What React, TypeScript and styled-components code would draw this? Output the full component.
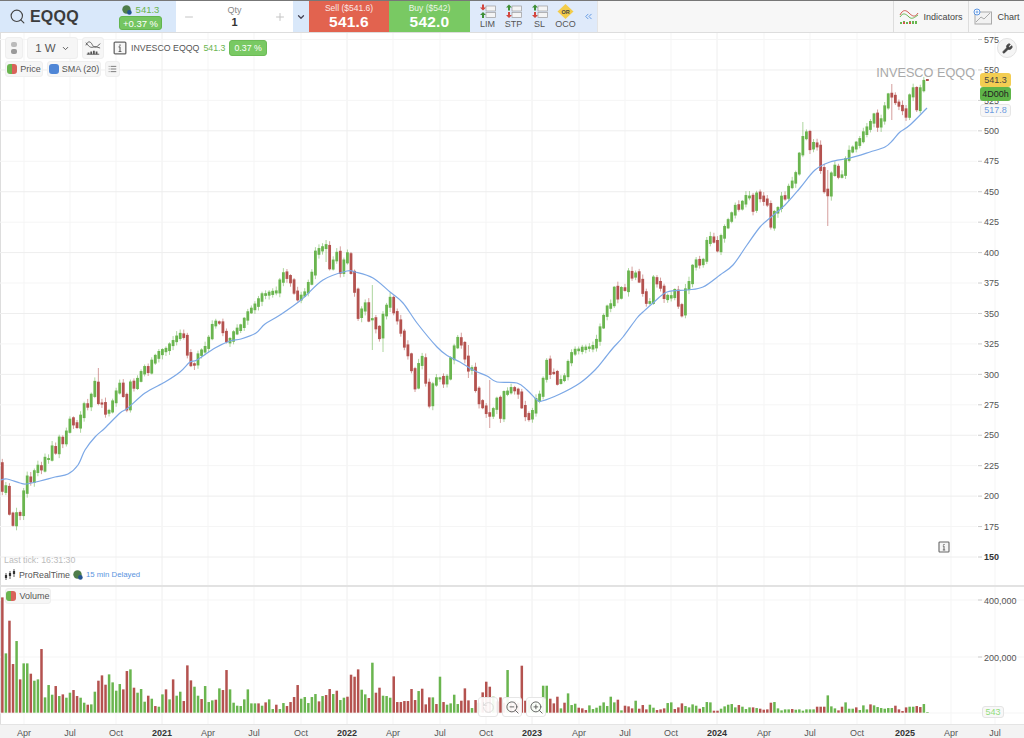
import styled, { createGlobalStyle } from "styled-components";
import { ChevronDown, ChevronsLeft, List, Minus, Plus, RotateCcw, Search, Wrench, ZoomIn, ZoomOut } from "lucide-react";

const GREEN = "#6ab54f";
const RED = "#b4524f";
const BLUE = "#7ca8e6";

const GlobalStyle = createGlobalStyle`
  html, body { margin: 0; padding: 0; background: #fff; }
  body { font-family: "Liberation Sans", Arial, sans-serif; color: #444; }
  * { box-sizing: border-box; }
`;

const Page = styled.div`
  width: 1024px;
  height: 738px;
  display: flex;
  flex-direction: column;
  overflow: hidden;
`;

/* ---------- top toolbar ---------- */

const TopBar = styled.header`
  height: 33px;
  flex: none;
  display: flex;
  border-top: 1px solid #777;
  border-bottom: 1px solid #ddd;
  background: #f7f7f7;
`;

const SymbolBox = styled.div`
  width: 105px;
  display: flex;
  align-items: center;
  gap: 4px;
  padding-left: 9px;
  background: #d9e8fa;
  color: #444;
`;

const SymbolName = styled.span`
  font-size: 16px;
  font-weight: 700;
  color: #3c3c3c;
  letter-spacing: 0.2px;
`;

const QuoteBox = styled.div`
  width: 71px;
  display: flex;
  flex-direction: column;
  align-items: center;
  padding-top: 3px;
  gap: 1px;
  background: #d9e8fa;
`;

const QuoteRow = styled.div`
  display: flex;
  align-items: center;
  gap: 4px;
  font-size: 9.5px;
  line-height: 11px;
  color: ${GREEN};
`;

const ChangeBadge = styled.span`
  font-size: 9.5px;
  line-height: 13px;
  height: 14px;
  padding: 0 3px;
  border-radius: 3px;
  color: #fff;
  background: #74c561;
  border: 1px solid #62b54e;
  white-space: nowrap;
`;

const QtyBox = styled.div`
  width: 117px;
  display: flex;
  align-items: center;
  justify-content: space-between;
  padding: 0 7px;
  background: #fff;
  color: #c4c4c4;
`;

const QtyValue = styled.div`
  display: flex;
  flex-direction: column;
  align-items: center;
  font-size: 9px;
  line-height: 11px;
  color: #888;
  b {
    font-size: 11px;
    line-height: 13px;
    color: #333;
  }
`;

const QtyMenu = styled.div`
  width: 16px;
  display: flex;
  align-items: center;
  justify-content: center;
  background: #d9e8fa;
  color: #445;
`;

const TradeButton = styled.div<{ $side: "sell" | "buy" }>`
  width: ${({ $side }) => ($side === "sell" ? "80px" : "81px")};
  display: flex;
  flex-direction: column;
  align-items: center;
  justify-content: center;
  color: #fff;
  background: ${({ $side }) => ($side === "sell" ? "#e2634f" : "#79c963")};
  span {
    font-size: 8.5px;
    line-height: 10px;
    opacity: 0.85;
  }
  b {
    font-size: 15.5px;
    line-height: 17px;
    letter-spacing: 0.2px;
  }
`;

const OrderBox = styled.div`
  width: 128px;
  display: flex;
  align-items: center;
  padding-left: 5px;
  gap: 1px;
  background: #dfeafa;
  border-right: 1px solid #e4e4e4;
`;

const OrderItem = styled.div`
  width: 25px;
  display: flex;
  flex-direction: column;
  align-items: center;
  font-size: 9px;
  line-height: 10px;
  color: #555;
  svg {
    display: block;
  }
`;

const Collapse = styled.div`
  margin-left: 4px;
  display: flex;
  color: #5b94e0;
`;

const Spacer = styled.div`
  flex: 1;
`;

const ToolButton = styled.div<{ $width: number }>`
  width: ${({ $width }) => $width}px;
  display: flex;
  align-items: center;
  justify-content: center;
  gap: 4px;
  border-left: 1px solid #ddd;
  font-size: 9px;
  color: #444;
`;

/* ---------- chart panes ---------- */

const PricePane = styled.section`
  position: relative;
  height: 552px;
  flex: none;
  border-left: 1px solid #ddd;
`;

const VolumePane = styled.section`
  position: relative;
  height: 139px;
  flex: none;
  border-top: 2px solid #e2e2e2;
  border-left: 1px solid #ddd;
`;

const AxisStrip = styled.div`
  height: 14px;
  flex: none;
  background: #f3f3f3;
  border-top: 1px solid #e4e4e4;
`;

const ChartSvg = styled.svg`
  display: block;
  position: absolute;
  left: -1px;
  top: 0;
`;

const AxisSvg = styled.svg`
  display: block;
`;

const AxisLabel = styled.text<{ $bold?: boolean }>`
  font-size: 9px;
  font-family: "Liberation Sans", Arial, sans-serif;
  font-weight: ${({ $bold }) => ($bold ? 700 : 400)};
  fill: ${({ $bold }) => ($bold ? "#333" : "#555")};
`;

const Watermark = styled.div`
  position: absolute;
  top: 33px;
  right: 49px;
  font-size: 12.7px;
  color: #a9a9a9;
`;

const Controls = styled.div`
  position: absolute;
  top: 4px;
  left: 4px;
  display: flex;
  flex-direction: column;
  gap: 2px;
`;

const ControlRow = styled.div`
  display: flex;
  align-items: center;
  gap: 4px;
`;

const Chip = styled.div<{ $w?: number; $h?: number }>`
  height: ${({ $h }) => $h ?? 16}px;
  ${({ $w }) => ($w ? `width: ${$w}px;` : "")}
  display: flex;
  align-items: center;
  justify-content: center;
  gap: 3px;
  padding: 0 2px;
  border-radius: 3px;
  background: #f6f6f6;
  border: 1px solid #efefef;
  font-size: 9px;
  color: #555;
  white-space: nowrap;
`;

const Interval = styled.span`
  font-size: 11.5px;
  margin-right: 2px;
`;

const Title = styled.div`
  display: flex;
  align-items: center;
  gap: 4px;
  margin-left: 5px;
  font-size: 8.8px;
  color: #555;
`;

const TitlePrice = styled.span`
  color: ${GREEN};
`;

const TitleBadge = styled.span`
  height: 16px;
  line-height: 14px;
  padding: 0 4px;
  border-radius: 3px;
  color: #fff;
  background: #79c963;
  border: 1px solid #6cbb56;
`;

const Legend = styled.span<{ $color?: string }>`
  flex: none;
  width: 10px;
  height: 10px;
  border-radius: 3px;
  background: ${({ $color }) => $color ?? `linear-gradient(90deg, ${GREEN} 50%, #d9625a 50%)`};
`;

const Wrenchy = styled.div`
  position: absolute;
  top: 5px;
  right: 7px;
  width: 20px;
  height: 20px;
  border-radius: 50%;
  display: flex;
  align-items: center;
  justify-content: center;
  background: #f5f5f5;
  border: 1px solid #e2e2e2;
  color: #444;
`;

const PriceBadges = styled.div`
  position: absolute;
  top: 40px;
  left: 979px;
  display: flex;
  flex-direction: column;
  align-items: flex-start;
  width: 32px;
`;

const PriceBadge = styled.div<{ $bg: string; $fg: string; $sma?: boolean }>`
  width: 31px;
  height: 14px;
  line-height: ${({ $sma }) => ($sma ? 11 : 14)}px;
  ${({ $sma }) => ($sma ? "height: 13px; margin-top: 3px; border: 1px solid #e6e6e6;" : "")}
  text-align: center;
  font-size: 9px;
  border-radius: 3px;
  color: ${({ $fg }) => $fg};
  background: ${({ $bg }) => $bg};
`;

const Footnote = styled.div`
  position: absolute;
  left: 3px;
  bottom: 5px;
  display: flex;
  flex-direction: column;
  gap: 4px;
`;

const LastTick = styled.div`
  font-size: 8.8px;
  color: #bcbcbc;
`;

const Feed = styled.div`
  display: flex;
  align-items: center;
  gap: 3px;
  font-size: 8.8px;
  color: #555;
`;

const Delayed = styled.span`
  font-size: 7.8px;
  color: #5b94e0;
`;

const InfoMark = styled.div`
  position: absolute;
  top: 508px;
  left: 937px;
  display: flex;
`;

const VolumeChip = styled.div`
  position: absolute;
  top: 1px;
  left: 4px;
`;

const ZoomBar = styled.div`
  position: absolute;
  left: 477px;
  bottom: 7px;
  display: flex;
  gap: 4px;
`;

const ZoomButton = styled.div<{ $off?: boolean }>`
  width: 20px;
  height: 20px;
  display: flex;
  align-items: center;
  justify-content: center;
  border-radius: 3px;
  background: rgba(255, 255, 255, 0.92);
  border: 1px solid #e6e6e6;
  color: ${({ $off }) => ($off ? "#d4d4d4" : "#555")};
`;

const LiveVolume = styled.div`
  position: absolute;
  left: 981px;
  bottom: 6px;
  width: 22px;
  height: 12px;
  line-height: 11px;
  text-align: center;
  font-size: 9px;
  border-radius: 3px;
  color: #92dc7e;
  background: #f8f8f8;
  border: 1px solid #e4e4e4;
`;

/* ---------- data, all read in page pixels ---------- */

const STEP = 3.558;
const START = 2.3;
const BARS = 261;
const priceY = (p: number) => 557 - (p - 150) * 1.2176;

const closes: [number, number][] = [
  [2.3, 491], [6, 487], [10, 518], [13, 525], [17, 512], [20, 515], [23, 495], [27, 477], [31, 482], [34, 472], [38, 466], [42, 470], [45, 459], [49, 459], [52, 447], [56, 453], [59, 438], [63, 443], [67, 430], [70, 419], [74, 424], [77, 427], [81, 415], [84, 405], [88, 406], [91, 396], [95, 382], [98, 403], [102, 404], [106, 414], [109, 411], [113, 401], [116, 392], [120, 384], [123, 394], [127, 410], [130, 382], [134, 387], [137, 381], [141, 373], [145, 367], [148, 372], [152, 361], [155, 357],
  [160, 352], [165, 350], [170, 345], [175, 338], [180, 335], [183, 332], [186, 350], [190, 362], [193, 370], [197, 355], [203, 350], [207, 345], [212, 325], [216, 322], [220, 323], [225, 338], [228, 345], [232, 335], [236, 330], [241, 326],
  [248, 312], [255, 305], [262, 295], [270, 293], [276, 292], [283, 273], [290, 280], [297, 300], [305, 292], [312, 273], [315, 253], [326, 245], [329, 270], [337, 252], [340, 273], [347, 252], [351, 273], [355, 293], [358, 317], [365, 303], [368, 320], [372, 318], [376, 328], [379, 340], [383, 315], [387, 305], [390, 298], [393, 310], [397, 320], [401, 333], [404, 345], [408, 355], [412, 372], [415, 388], [418, 365], [422, 357], [426, 385], [429, 407], [433, 383], [437, 378], [440, 378], [443, 383], [447, 378], [451, 357], [454, 347], [458, 338], [461, 343], [465, 358], [468, 370], [472, 368], [475, 388], [479, 402], [482, 405], [486, 413], [489, 417], [493, 410], [497, 398], [500, 420], [504, 393], [507, 393], [511, 388], [514, 390], [518, 392], [521, 405], [525, 415], [529, 418], [532, 413], [536, 400], [539, 398], [543, 380], [546, 358], [550, 373], [554, 373], [557, 383], [564, 378], [568, 362], [573, 350],
  [578, 350], [585, 348], [593, 347], [596, 342], [600, 328], [603, 317], [607, 307], [611, 305], [614, 287], [618, 298], [621, 288], [625, 290], [628, 272], [632, 277], [635, 272], [639, 280], [643, 293], [646, 303], [650, 302], [653, 278], [657, 283], [660, 285], [664, 298], [667, 297], [671, 297], [675, 290], [678, 305], [682, 315], [685, 290], [689, 282], [692, 268], [696, 260], [699, 265], [703, 261], [706, 243], [710, 238], [713, 238], [717, 252], [721, 237], [724, 229], [728, 220], [731, 216], [735, 206], [739, 208], [742, 203], [746, 197], [749, 195], [753, 210], [756, 193], [760, 197], [763, 200], [767, 202], [771, 228], [774, 213], [778, 208],
  [782, 195], [786, 199], [790, 180], [794, 184], [798, 160], [802, 140], [806, 130], [809, 150], [812, 145], [816, 140], [820, 165], [824, 190], [828, 195], [832, 170], [836, 165], [840, 185], [845, 160], [850, 150], [855, 145], [860, 140], [865, 130], [870, 125], [873, 110], [877, 127], [880, 122], [883, 116], [887, 95], [891, 94], [895, 102], [899, 106], [902, 108], [905, 122], [909, 98], [913, 87], [916, 113], [920, 90], [923.5, 82], [927.6, 79],
];

const sma: [number, number][] = [
  [1, 480], [7, 479], [20, 483], [26, 484], [40, 481], [55, 477], [68, 474], [78, 465], [85, 450], [95, 437], [105, 428], [120, 413], [128, 408], [145, 393], [165, 382], [180, 372], [190, 362], [197, 360], [215, 348], [230, 341], [241, 339], [256, 333], [265, 324], [280, 315], [301, 300], [323, 280], [347, 271], [355, 272], [373, 278], [390, 292], [403, 303], [417, 323], [437, 347], [448, 356], [460, 362], [473, 370], [487, 376], [497, 382], [517, 383], [527, 390], [537, 400], [542, 401], [560, 394], [580, 383], [595, 370], [605, 358], [613, 348], [623, 337], [637, 318], [643, 312], [653, 303], [667, 292], [687, 290], [703, 287], [720, 275], [733, 265], [747, 245], [760, 227], [770, 218], [785, 205], [800, 188], [815, 170], [830, 162], [850, 158], [870, 152], [885, 147], [893, 140], [900, 132], [910, 125], [927, 108],
];

// wicks longer than the usual ones: x, high, low
const longWicks: [number, number, number][] = [
  [98, 368, 403], [130, 382, 410], [372, 285, 350], [383, 315, 352], [327, 240, 262], [828, 170, 226], [893, 84, 120], [804, 122, 150], [468, 345, 378], [489, 380, 428],
];

const interpolate = (pts: [number, number][], x: number) => {
  for (let i = 1; i < pts.length; i++) {
    if (x <= pts[i][0]) {
      const [x0, y0] = pts[i - 1];
      const [x1, y1] = pts[i];
      return y0 + ((y1 - y0) * (x - x0)) / (x1 - x0);
    }
  }
  return pts[pts.length - 1][1];
};

const seeded = (i: number) => {
  const v = Math.sin(i * 127.1 + 11.7) * 43758.5453;
  return v - Math.floor(v);
};

const candles = Array.from({ length: BARS }, (_, i) => {
  const x = START + STEP * i;
  const last = i === BARS - 1;
  const close = last ? 79 : interpolate(closes, x);
  const open = i === 0 ? 463 : last ? 81 : interpolate(closes, x - STEP);
  // bodies overlap the neighbour a little, as real open and close rarely meet
  const pad = last ? 0 : 0.6 + seeded(i + 900) * 1.6;
  const top = Math.min(open, close) - pad;
  const bottom = Math.max(open, close) + pad;
  let high = last ? top : top - 0.5 - seeded(i) * 4;
  let low = last ? bottom : bottom + 0.5 + seeded(i + 500) * 4;
  const long = longWicks.find(([lx]) => Math.abs(lx - x) < 1.8);
  if (long) {
    high = Math.min(high, long[1]);
    low = Math.max(low, long[2]);
  }
  return { x, top, bottom, high, low, up: !last && close < open };
});

// volume: bar heights at 3x, positive = green, negative = red
const volumes = [
  -346, 178, -276, -146, 215, -100, 148, 148, -117, 96, 100, -191, 46, 83, 54, -80, 50, -55, 45, 60, -68, -50, 45, 30, -24, 25, 63, -96, -112, -84, 115, 91, 66, 86, -70, -125, 130, -75, 60, 71, 33, -51, 42, -20, 18, 55, -70, 40, -100, 51, 63, -35, -142, -97, 78, 51, -41, 80, 32, 37, -39, 73, -68, -128, 70, 30, 21, 20, 40, 70,
  28, 28, -28, 21, -31, 40, 11, -24, 11, 29, -20, -32, -47, -83, 42, 47, 29, 47, 56, -34, 50, -53, -71, 56, -66, 38, 45, -48, -114, -108, -130, 69, 55, -44, 150, -60, -75, 51, 50, 45, -109, -32, -32, -35, -35, -71, -38, 65, -72, -25, -46, 46, -26, 108, -32, 24, 28, 54, 26, -36, -73, -37, 14, -38, 30, -61, -93, -78, 48, -34, -46, -30, 128, -30, -36, -30, -141, -36, 38, 30, 34, 30, 81, 81, -42, -28, -48, 13, -30, 58, 23, 27, -15, -13, -8, 22,
  11, 15, 21, 31, 20, 48, 31, -39, 7, -21, -19, -13, 36, -12, -23, -10, 24, 15, -8, -10, -13, 29, 31, -11, -16, -28, 20, 16, 25, 21, -12, 17, 32, 31, -6, -6, 12, 19, 24, 26, 16, -23, 18, 11, 16, -16, 14, -12, -9, -10, -30, 32, 13, 7, 10, 10, -11, 9, 10, 6, 10, 10, 10, -18, -18, -18, 52, 19, 13, -7, -18, 31, 12, 12, -16, 8, 22, 10, -25, 22, 17, 14, 12, 14, 14, -21, -10, -5, -16, 18, 18, -20, -17, 26, 2,
];

const timeLabels: [number, string, boolean?][] = [
  [24, "Apr"], [70, "Jul"], [116, "Oct"], [162, "2021", true], [208, "Apr"], [254, "Jul"], [301, "Oct"], [347, "2022", true], [393, "Apr"], [440, "Jul"], [486, "Oct"], [532, "2023", true], [579, "Apr"], [625, "Jul"], [671, "Oct"], [717, "2024", true], [764, "Apr"], [810, "Jul"], [857, "Oct"], [905, "2025", true], [951, "Apr"], [995, "Jul"],
];

const priceLevels = Array.from({ length: 18 }, (_, i) => 150 + i * 25);

// catmull-rom through the read points, the source line is a smooth average
const smooth = (pts: [number, number][]) => {
  let d = `M${pts[0][0]} ${pts[0][1]}`;
  for (let i = 0; i < pts.length - 1; i++) {
    const p0 = pts[Math.max(i - 1, 0)];
    const p1 = pts[i];
    const p2 = pts[i + 1];
    const p3 = pts[Math.min(i + 2, pts.length - 1)];
    const c1x = p1[0] + (p2[0] - p0[0]) / 6;
    const c1y = p1[1] + (p2[1] - p0[1]) / 6;
    const c2x = p2[0] - (p3[0] - p1[0]) / 6;
    const c2y = p2[1] - (p3[1] - p1[1]) / 6;
    d += `C${c1x} ${c1y} ${c2x} ${c2y} ${p2[0]} ${p2[1]}`;
  }
  return d;
};

/* ---------- drawings ---------- */

const VerticalGrid = ({ top, bottom }: { top: number; bottom: number }) => (
  <>
    {timeLabels.map(([x, , year]) => (
      <line key={x} x1={x} x2={x} y1={top} y2={bottom} stroke={year ? "#eeeeee" : "#f5f5f5"} />
    ))}
  </>
);

const PriceChart = () => (
  <ChartSvg width="1024" height="552" viewBox="0 33 1024 552">
    <VerticalGrid top={33} bottom={585} />
    {priceLevels.map((p) => (
      <g key={p}>
        <line x1="0" x2="977" y1={priceY(p)} y2={priceY(p)} stroke={p % 50 === 0 ? "#eeeeee" : "#f5f5f5"} />
        <line x1="978" x2="982" y1={priceY(p)} y2={priceY(p)} stroke="#ccc" />
        <AxisLabel x="984" y={priceY(p) + 3.2} $bold={p === 150}>
          {p}
        </AxisLabel>
      </g>
    ))}
    {candles.map((c) => (
      <g key={c.x} fill={c.up ? GREEN : RED} stroke={c.up ? GREEN : RED}>
        <line x1={c.x} x2={c.x} y1={c.high} y2={c.low} strokeWidth="1" opacity="0.55" />
        <rect x={c.x - 1.4} y={c.top} width="2.8" height={c.bottom - c.top} stroke="none" />
      </g>
    ))}
    <path d={smooth(sma)} fill="none" stroke={BLUE} strokeWidth="1.2" />
  </ChartSvg>
);

const VolumeChart = () => (
  <ChartSvg width="1024" height="137" viewBox="0 587 1024 137">
    <VerticalGrid top={587} bottom={724} />
    {[600, 657, 713].map((y) => (
      <line key={y} x1="0" x2="1024" y1={y} y2={y} stroke="#f5f5f5" />
    ))}
    <line x1="978" x2="982" y1="600" y2="600" stroke="#ccc" />
    <line x1="978" x2="982" y1="657" y2="657" stroke="#ccc" />
    <AxisLabel x="984" y="604">400,000</AxisLabel>
    <AxisLabel x="984" y="661">200,000</AxisLabel>
    {volumes.map((v, i) => (
      <rect
        key={i}
        x={START + STEP * i - 1.2}
        y={712.7 - Math.abs(v) / 3}
        width="2.5"
        height={Math.abs(v) / 3}
        fill={v > 0 ? GREEN : RED}
      />
    ))}
  </ChartSvg>
);

const TimeAxis = () => (
  <AxisSvg width="1024" height="13" viewBox="0 725 1024 13">
    {timeLabels.map(([x, label, year]) => (
      <AxisLabel key={x} x={x} y="736" textAnchor="middle" $bold={year}>
        {label}
      </AxisLabel>
    ))}
  </AxisSvg>
);

const Globe = () => (
  <svg width="10" height="10" viewBox="0 0 10 10">
    <circle cx="4.5" cy="4.5" r="4.2" fill="#4f7d4a" />
    <circle cx="7.4" cy="7.4" r="2.3" fill="#24548f" />
  </svg>
);

const InfoSquare = ({ size }: { size: number }) => (
  <svg width={size} height={size} viewBox="0 0 12 12" fill="none" stroke="#666">
    <rect x="1" y="1" width="10" height="10" rx="0.8" fill="#f6f6f6" strokeWidth="1.1" />
    <path d="M6 5v4M4.8 9h2.4M4.8 5H6" strokeWidth="1" />
    <path d="M6 3v1" strokeWidth="1.2" />
  </svg>
);

const OrderIcon = ({ first, second }: { first: string; second: string }) => {
  const arrow = (y: number, color: string) =>
    color === RED ? (
      <path d={`M3 ${y}h2v3h2l-3 3l-3-3h2z`} fill="#d2463e" />
    ) : (
      <path d={`M4 ${y}l3 3h-2v3h-2v-3h-2z`} fill="#3f8f35" />
    );
  return (
    <svg width="17" height="15" viewBox="0 0 17 15">
      {arrow(0.5, first)}
      {arrow(8, second)}
      <rect x="7" y="2" width="9.5" height="5" fill="#f4f4f4" stroke="#9a9a9a" strokeWidth="0.7" />
      <rect x="7" y="8.5" width="9.5" height="5" fill="#f4f4f4" stroke="#9a9a9a" strokeWidth="0.7" />
    </svg>
  );
};

const OcoIcon = () => (
  <svg width="17" height="15" viewBox="0 0 17 15">
    <path d="M8.5 0L16.5 7.5L8.5 15L0.5 7.5Z" fill="#f3cc4a" />
    <text x="8.5" y="9.6" textAnchor="middle" fontSize="5.5" fontWeight="700" fill="#444" fontFamily="Liberation Sans, Arial, sans-serif">
      OR
    </text>
  </svg>
);

const IndicatorsIcon = () => (
  <svg width="20" height="16" viewBox="0 0 20 16" fill="none">
    <path d="M1 6C4 0 7 1 10 4S16 9 19 4" stroke="#d2564c" />
    <path d="M1 8C4 3 7 5 10 8S16 8 19 6" stroke="#67b650" />
    <path d="M2 15v-2M5 15v-3M8 15v-2M11 15v-3M14 15v-3M17 15v-3" stroke="#67b650" strokeWidth="2" />
    <path d="M5 15v-2M11 15v-2" stroke="#d2564c" strokeWidth="2" />
  </svg>
);

const ChartIcon = () => (
  <svg width="20" height="17" viewBox="0 0 20 17" fill="none">
    <rect x="2" y="4" width="16.5" height="12" fill="#f2f2f2" stroke="#aaa" />
    <path d="M3 14l5-5l3 2l6-6" stroke="#aaa" />
    <circle cx="4" cy="4" r="3" fill="#fff" stroke="#5b94e0" />
    <path d="M4 2.5v3M2.5 4h3" stroke="#5b94e0" strokeWidth="0.8" />
  </svg>
);

const DrawIcon = () => (
  <svg width="18" height="18" viewBox="0 0 18 18" fill="none" stroke="#555">
    <path d="M1 6C3 1 6 1 8 5S13 9 17 4" />
    <path d="M1 3C4 7 6 9 9 8S13 8 17 9" />
    <path d="M2 16h14" />
    <path d="M4 16v-2M7 16v-3M10 16v-4M13 16v-3" strokeWidth="2" />
  </svg>
);

const HandleIcon = () => (
  <svg width="8" height="14" viewBox="0 0 8 14">
    <rect x="1" y="1" width="6" height="5" rx="2" fill="#bbb" />
    <rect x="1" y="8" width="6" height="5" rx="2" fill="#999" />
  </svg>
);

const BrandIcon = () => (
  <svg width="12" height="11" viewBox="0 0 12 11" fill="none" stroke="#333">
    <path d="M2 4v7M6 2v8M10 0v8" strokeWidth="0.8" />
    <path d="M2 6v3M6 4v3M10 2v3" strokeWidth="2.2" />
  </svg>
);

export default function App() {
  return (
    <Page>
      <GlobalStyle />
      <TopBar>
        <SymbolBox>
          <Search size={17} strokeWidth={1.6} />
          <SymbolName>EQQQ</SymbolName>
        </SymbolBox>
        <QuoteBox>
          <QuoteRow>
            <Globe />
            541.3
          </QuoteRow>
          <ChangeBadge>+0.37 %</ChangeBadge>
        </QuoteBox>
        <QtyBox>
          <Minus size={12} />
          <QtyValue>
            Qty
            <b>1</b>
          </QtyValue>
          <Plus size={12} />
        </QtyBox>
        <QtyMenu>
          <ChevronDown size={10} strokeWidth={3} />
        </QtyMenu>
        <TradeButton $side="sell">
          <span>Sell ($541.6)</span>
          <b>541.6</b>
        </TradeButton>
        <TradeButton $side="buy">
          <span>Buy ($542)</span>
          <b>542.0</b>
        </TradeButton>
        <OrderBox>
          <OrderItem>
            <OrderIcon first={RED} second={GREEN} />
            LIM
          </OrderItem>
          <OrderItem>
            <OrderIcon first={GREEN} second={RED} />
            STP
          </OrderItem>
          <OrderItem>
            <OrderIcon first={GREEN} second={RED} />
            SL
          </OrderItem>
          <OrderItem>
            <OcoIcon />
            OCO
          </OrderItem>
          <Collapse>
            <ChevronsLeft size={11} />
          </Collapse>
        </OrderBox>
        <Spacer />
        <ToolButton $width={75}>
          <IndicatorsIcon />
          Indicators
        </ToolButton>
        <ToolButton $width={56}>
          <ChartIcon />
          Chart
        </ToolButton>
      </TopBar>

      <PricePane>
        <PriceChart />
        <Watermark>INVESCO EQQQ</Watermark>
        <Controls>
          <ControlRow>
            <Chip $w={18} $h={22}>
              <HandleIcon />
            </Chip>
            <Chip $w={51} $h={22}>
              <Interval>1 W</Interval>
              <ChevronDown size={9} strokeWidth={2.5} />
            </Chip>
            <Chip $w={22} $h={22}>
              <DrawIcon />
            </Chip>
            <Title>
              <InfoSquare size={14} />
              INVESCO EQQQ
              <TitlePrice>541.3</TitlePrice>
              <TitleBadge>0.37 %</TitleBadge>
            </Title>
          </ControlRow>
          <ControlRow>
            <Chip $w={38}>
              <Legend />
              Price
            </Chip>
            <Chip $w={54}>
              <Legend $color="#4f86d6" />
              SMA (20)
            </Chip>
            <Chip $w={15}>
              <List size={10} />
            </Chip>
          </ControlRow>
        </Controls>
        <Wrenchy>
          <Wrench size={11} fill="#444" />
        </Wrenchy>
        <PriceBadges>
          <PriceBadge $bg="#f3cd52" $fg="#444">541.3</PriceBadge>
          <PriceBadge $bg="#5fb548" $fg="#222">4D00h</PriceBadge>
          <PriceBadge $bg="#f7f7f7" $fg="#6d9ce0" $sma>517.8</PriceBadge>
        </PriceBadges>
        <InfoMark>
          <InfoSquare size={12} />
        </InfoMark>
        <Footnote>
          <LastTick>Last tick: 16:31:30</LastTick>
          <Feed>
            <BrandIcon />
            ProRealTime
            <Globe />
            <Delayed>15 min Delayed</Delayed>
          </Feed>
        </Footnote>
      </PricePane>

      <VolumePane>
        <VolumeChart />
        <VolumeChip>
          <Chip $w={46}>
            <Legend />
            Volume
          </Chip>
        </VolumeChip>
        <ZoomBar>
          <ZoomButton $off>
            <RotateCcw size={13} strokeWidth={1.4} />
          </ZoomButton>
          <ZoomButton>
            <ZoomOut size={15} strokeWidth={1.4} />
          </ZoomButton>
          <ZoomButton>
            <ZoomIn size={15} strokeWidth={1.4} />
          </ZoomButton>
        </ZoomBar>
        <LiveVolume>543</LiveVolume>
      </VolumePane>

      <AxisStrip>
        <TimeAxis />
      </AxisStrip>
    </Page>
  );
}
